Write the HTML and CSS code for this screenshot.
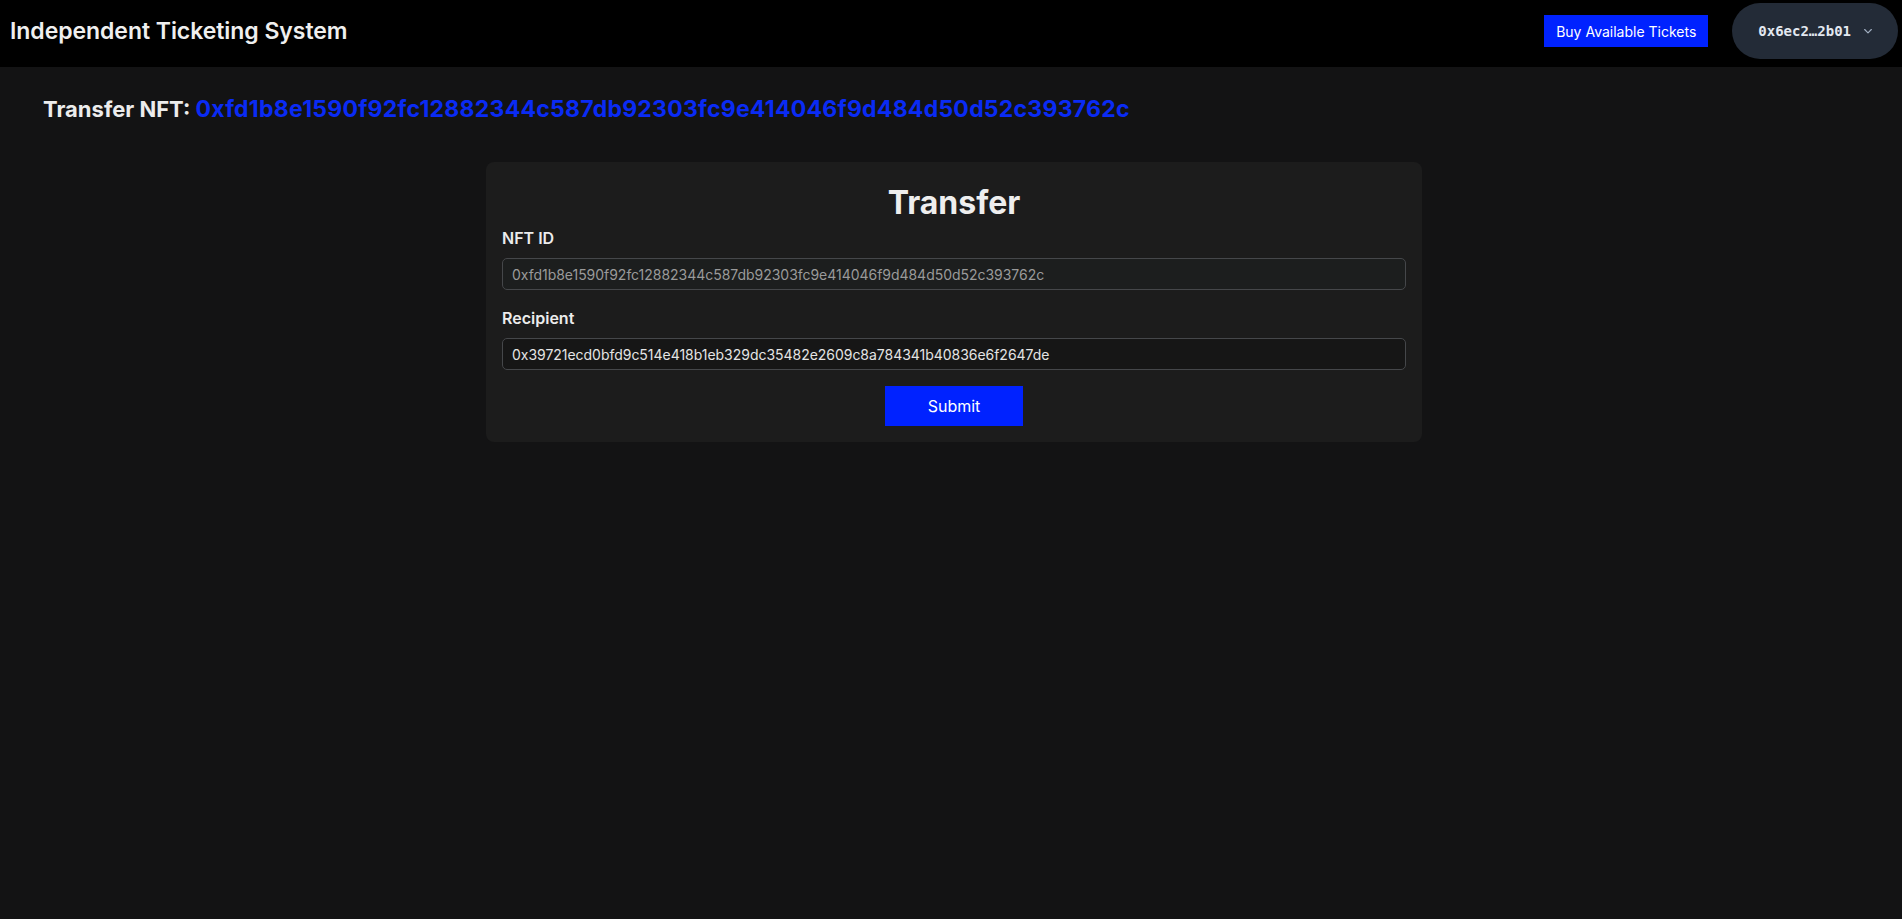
FILE: index.html
```html
<!DOCTYPE html>
<html lang="en">
<head>
    <meta charset="UTF-8">
    <title>Independent Ticketing System</title>
    <link rel="stylesheet" href="styles.css">
</head>
<body>
    <header class="topbar">
        <h1 class="brand">Independent Ticketing System</h1>
        <div class="actions">
            <button class="buy">Buy Available Tickets</button>
            <button class="wallet">
                <span>0x6ec2…2b01</span>
                <svg width="10" height="10" viewBox="0 0 12 12" fill="none" stroke="#a0aec0" stroke-width="1.4" stroke-linecap="round" stroke-linejoin="round"><path d="M2 4.2l4 4 4-4"/></svg>
            </button>
        </div>
    </header>
    <main class="page">
        <h2 class="heading">Transfer NFT: <span class="hash">0xfd1b8e1590f92fc12882344c587db92303fc9e414046f9d484d50d52c393762c</span></h2>
        <form class="card">
            <h3 class="card-title">Transfer</h3>
            <label class="label">NFT ID</label>
            <input class="field locked" value="0xfd1b8e1590f92fc12882344c587db92303fc9e414046f9d484d50d52c393762c" disabled>
            <label class="label">Recipient</label>
            <input class="field" value="0x39721ecd0bfd9c514e418b1eb329dc35482e2609c8a784341b40836e6f2647de">
            <button type="button" class="submit">Submit</button>
        </form>
    </main>
</body>
</html>
```

FILE: styles.css
```css
* {
    box-sizing: border-box;
}
body {
    margin: 0;
    background: #131314;
    color: #ececec;
    font-family: Inter, "Noto Sans", sans-serif;
    min-height: 919px;
}

/* top bar */
.topbar {
    display: flex;
    align-items: center;
    justify-content: space-between;
    height: 67px;
    padding: 3px 4px 8px 10px;
    background: #000;
}
.brand {
    margin: 0;
    font-size: 23px;
    font-weight: 600;
    letter-spacing: -.05px;
    color: #efefef;
}
.actions {
    display: flex;
    align-items: center;
    gap: 24px;
}
.buy {
    height: 32px;
    padding: 0 12px;
    border: 0;
    background: #0022ff;
    color: #fff;
    font-family: Inter, sans-serif;
    font-size: 14px;
}
.wallet {
    display: flex;
    align-items: center;
    gap: 12px;
    height: 56px;
    padding: 0 25px 0 26px;
    border: 0;
    border-radius: 28px;
    background: #232b37;
    color: #e2e8f0;
    font-family: "DejaVu Sans Mono", monospace;
    font-size: 14px;
    font-weight: bold;
}

/* content */
.page {
    padding: 0 43px;
}
.heading {
    margin: 0;
    padding: 28px 0 0;
    font-size: 22px;
    font-weight: 700;
    line-height: 28px;
    color: #ececec;
}
.hash {
    font-size: 23px;
    color: #0a2bf5;
    letter-spacing: .25px;
}
.card {
    display: flex;
    flex-direction: column;
    width: 936px;
    margin: 39px 0 0 443px;
    padding: 17px 16px 16px;
    background: #1c1c1c;
    border-radius: 8px;
}
.card-title {
    margin: 5px 0 4px;
    text-align: center;
    font-size: 32px;
    font-weight: 700;
    line-height: 1.2;
    color: #eeeeee;
}
.label {
    font-size: 16px;
    font-weight: 600;
    line-height: 24px;
    margin-bottom: 8px;
}
.field {
    height: 32px;
    padding: 0 9px;
    margin-bottom: 17px;
    border: 1px solid #45474a;
    border-radius: 5px;
    background: #161616;
    color: #e4e4e4;
    font-family: Inter, sans-serif;
    font-size: 14px;
    letter-spacing: -.03px;
}
.field.locked {
    background: #1c1e1e;
    color: #9a9a9a;
    margin-bottom: 16px;
}
.submit {
    align-self: center;
    width: 138px;
    height: 40px;
    margin-top: -1px;
    border: 0;
    background: #0022ff;
    color: #fff;
    font-family: Inter, sans-serif;
    font-size: 16px;
}
```
